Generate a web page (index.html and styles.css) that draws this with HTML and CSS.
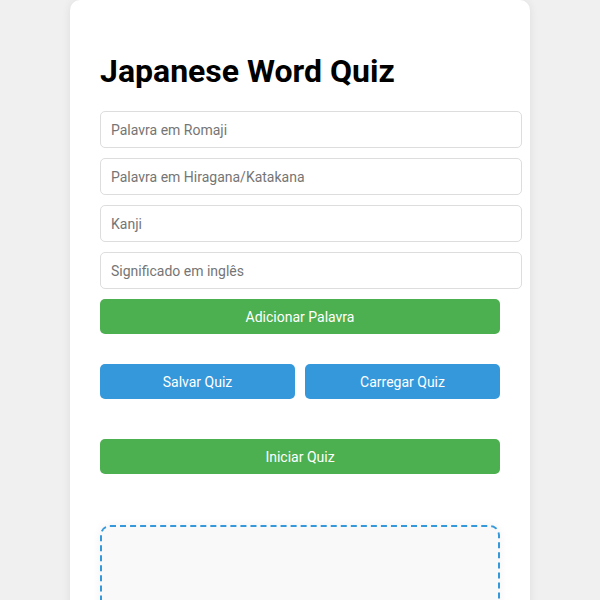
FILE: index.html
```html
<!DOCTYPE html>
<html lang="pt">
<head>
<meta charset="utf-8">
<title>Japanese Word Quiz</title>
<link rel="stylesheet" href="styles.css">
</head>
<body>
<div class="card">
  <h1 class="title">Japanese Word Quiz</h1>
  <div class="form">
    <input class="field" type="text" placeholder="Palavra em Romaji">
    <input class="field" type="text" placeholder="Palavra em Hiragana/Katakana">
    <input class="field" type="text" placeholder="Kanji">
    <input class="field" type="text" placeholder="Significado em inglês">
    <button class="btn btn-green">Adicionar Palavra</button>
  </div>
  <div class="row">
    <button class="btn btn-blue">Salvar Quiz</button>
    <button class="btn btn-blue">Carregar Quiz</button>
  </div>
  <button class="btn btn-green btn-start">Iniciar Quiz</button>
  <div class="quiz-area"></div>
</div>
</body>
</html>
```
FILE: styles.css
```css
html, body {
  margin: 0;
  padding: 0;
}
body {
  background: #f0f0f0;
  font-family: Roboto, "Liberation Sans", Arial, sans-serif;
  color: #000;
}
.card {
  width: 400px;
  margin: 0 auto;
  background: #fff;
  border-radius: 10px;
  padding: 30px 30px 40px;
  box-shadow: 0 0 10px rgba(0,0,0,0.08);
  min-height: 600px;
}
.title {
  font-size: 32px;
  font-weight: 700;
  margin: 22px 0 21px;
  line-height: 38px;
}
.form {
  display: flex;
  flex-direction: column;
  align-items: flex-start;
}
.field {
  width: 100%;
  box-sizing: content-box;
  padding: 0 10px;
  height: 35px;
  border: 1px solid #ddd;
  border-radius: 5px;
  font-family: inherit;
  font-size: 14px;
  color: #333;
  margin: 0 0 10px;
  background: #fff;
}
.field::placeholder {
  color: #757575;
}
.btn {
  display: block;
  width: 100%;
  height: 35px;
  border: none;
  border-radius: 5px;
  color: #fff;
  font-family: inherit;
  font-size: 14px;
  cursor: pointer;
}
.btn-green {
  background: #4caf50;
}
.btn-blue {
  background: #3498db;
}
.row {
  display: flex;
  gap: 10px;
  margin-top: 30px;
}
.btn-start {
  margin-top: 40px;
}
.quiz-area {
  margin-top: 51px;
  height: 200px;
  border: 2px dashed #3498db;
  border-radius: 10px;
  background: #f9f9f9;
  box-shadow: 0 0 8px rgba(0,0,0,0.06);
}
```
